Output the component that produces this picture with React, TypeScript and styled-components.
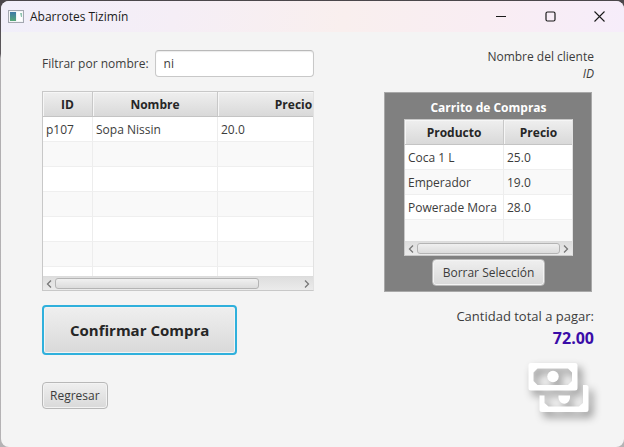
import React, { useState } from "react";
import styled, { createGlobalStyle } from "styled-components";

const GlobalStyle = createGlobalStyle`
  *, *::before, *::after { box-sizing: border-box; }
  body {
    margin: 0;
    background: linear-gradient(#4b474b 0, #5c585c 12%, #b0aeb0 13%, #b5b3b5 100%);
    font-family: "Open Sans", "Noto Sans", sans-serif;
    font-size: 12px;
    line-height: 17px;
    color: #3c3c3c;
  }
  button, input { font: inherit; color: inherit; }
`;

const Window = styled.main`
  display: flex;
  flex-direction: column;
  min-height: calc(100vh - 1px);
  margin: 1px 0 0 1px;
  border-radius: 8px;
  background: #f4f4f4;
  overflow: hidden;
`;

const TitleBar = styled.header`
  display: flex;
  align-items: center;
  height: 31px;
  padding-left: 7px;
  background: linear-gradient(100deg, #f1effa 0%, #f5eef6 28%, #f9efee 55%, #f9edf3 78%, #f6edfa 100%);
  color: #1a1a1a;
`;

const Title = styled.h1`
  flex: 1;
  margin: 0 0 0 6px;
  font-size: 12px;
  font-weight: 400;
`;

const CaptionButton = styled.button`
  display: grid;
  place-items: center;
  width: 49px;
  height: 30px;
  padding: 0;
  border: 0;
  background: none;
`;

const Content = styled.div`
  display: grid;
  grid-template-columns: minmax(0, 272fr) minmax(0, 210fr);
  column-gap: 70px;
  padding: 16px 30px 24px 41px;
`;

const LeftColumn = styled.section`
  display: flex;
  flex-direction: column;
  align-items: flex-start;
  padding-top: 2px;
`;

const RightColumn = styled.section`
  display: flex;
  flex-direction: column;
`;

const Filter = styled.div`
  display: flex;
  align-items: center;
  gap: 6px;
  width: 100%;
  margin-bottom: 14px;
`;

const FilterInput = styled.input`
  flex: 1;
  min-width: 0;
  height: 27px;
  padding: 0 8px;
  border: 1px solid #c8c8c8;
  border-top-color: #b9b9b9;
  border-radius: 4px;
  background: #fff;
  box-shadow: inset 0 1px 1px #ececec;
  outline: none;
`;

const TableBox = styled.div`
  width: 100%;
  border: 1px solid #c8c8c8;
  border-right-color: #e2e2e2;
  background: #fff;
`;

const Viewport = styled.div<{ $height: number }>`
  height: ${(p) => p.$height}px;
  overflow: hidden;
`;

const Table = styled.table<{ $width: number }>`
  width: ${(p) => p.$width}px;
  table-layout: fixed;
  border-collapse: separate;
  border-spacing: 0;

  th {
    height: 25px;
    padding: 0;
    border-right: 1px solid #c8c8c8;
    border-bottom: 1px solid #c4c4c4;
    background: linear-gradient(#efefef, #d9d9d9);
    box-shadow: inset 1px 1px 0 #f6f6f6;
    color: #262626;
    font-weight: 700;
    text-align: center;
  }

  td {
    height: 25px;
    padding: 0 3px;
    border-right: 1px solid #ededed;
    border-bottom: 1px solid #efefef;
    white-space: nowrap;
  }

  tbody tr:nth-child(even) { background: #f9f9f9; }
`;

const Scrollbar = styled.div`
  display: flex;
  align-items: center;
  height: 14px;
  border-top: 1px solid #dcdcdc;
  background: linear-gradient(#dedede, #ebebeb);
`;

const Arrow = styled.button`
  display: grid;
  place-items: center;
  width: 12px;
  height: 12px;
  padding: 0;
  border: 0;
  background: none;
`;

const Track = styled.div`
  flex: 1;
`;

const Thumb = styled.div`
  height: 11px;
  border: 1px solid #b4b4b4;
  border-radius: 3px;
  background: linear-gradient(#f0f0f0, #dcdcdc);
`;

const Button = styled.button<{ $primary?: boolean }>`
  height: ${(p) => (p.$primary ? 50 : 27)}px;
  padding: 0 ${(p) => (p.$primary ? 26 : 7)}px;
  border: ${(p) => (p.$primary ? "2px solid #2fb0dc" : "1px solid #b8b8b8")};
  border-radius: 4px;
  background: linear-gradient(#efefef, #d9d9d9);
  box-shadow: inset 0 0 0 1px #f3f3f3;
  color: ${(p) => (p.$primary ? "#262626" : "#3c3c3c")};
  font-size: ${(p) => (p.$primary ? 15 : 12)}px;
  font-weight: ${(p) => (p.$primary ? 700 : 400)};
  white-space: nowrap;
`;

const Actions = styled.div`
  display: flex;
  flex-direction: column;
  align-items: flex-start;
  gap: 27px;
  margin-top: 14px;
`;

const Client = styled.div`
  margin-bottom: 10px;
  text-align: right;
`;

const ClientId = styled.div`
  font-style: italic;
`;

const Cart = styled.div`
  display: flex;
  flex-direction: column;
  align-items: center;
  height: 200px;
  margin-right: 2px;
  padding: 6px 18px 0 19px;
  border: 1px solid #a8a8a8;
  background: #808080;
`;

const CartTitle = styled.h2`
  margin: 0 0 3px;
  color: #fff;
  font-size: 12px;
  font-weight: 700;
  line-height: 17px;
`;

const CartFooter = styled.div`
  margin-top: 3px;
`;

const CartButton = styled(Button)`
  padding: 0 10px;
`;

const Total = styled.div`
  margin-top: 16px;
  font-size: 13px;
  text-align: right;
`;

const Amount = styled.output`
  display: block;
  margin-top: 3px;
  color: #3a0ca8;
  font-size: 16px;
  font-weight: 700;
  line-height: 20px;
`;

const MoneyIcon = styled.svg`
  align-self: flex-end;
  margin-top: 15px;
  overflow: visible;
  filter: drop-shadow(4px 5px 4px rgba(0, 0, 0, 0.42));
`;

type Column = { label: string; width: number };

const productColumns: Column[] = [
  { label: "ID", width: 50 },
  { label: "Nombre", width: 125 },
  { label: "Precio", width: 152 },
];

const cartColumns: Column[] = [
  { label: "Producto", width: 99 },
  { label: "Precio", width: 70 },
];

const products = [["p107", "Sopa Nissin", "20.0"]];

const cartItems = [
  ["Coca 1 L", "25.0"],
  ["Emperador", "19.0"],
  ["Powerade Mora", "28.0"],
];

type DataTableProps = {
  label: string;
  columns: Column[];
  rows: string[][];
  rowCount: number;
  height: number;
  thumb: number;
};

function DataTable({ label, columns, rows, rowCount, height, thumb }: DataTableProps) {
  const filled = Array.from({ length: rowCount }, (_, i) => rows[i] ?? columns.map(() => ""));
  return (
    <TableBox>
      <Viewport $height={height}>
        <Table aria-label={label} $width={columns.reduce((sum, c) => sum + c.width, 0)}>
          <colgroup>
            {columns.map((c) => (
              <col key={c.label} style={{ width: c.width }} />
            ))}
          </colgroup>
          <thead>
            <tr>
              {columns.map((c) => (
                <th key={c.label} scope="col">{c.label}</th>
              ))}
            </tr>
          </thead>
          <tbody>
            {filled.map((row, r) => (
              <tr key={r}>
                {row.map((cell, c) => (
                  <td key={c}>{cell}</td>
                ))}
              </tr>
            ))}
          </tbody>
        </Table>
      </Viewport>
      <Scrollbar>
        <Arrow aria-label="Desplazar a la izquierda">
          <svg width="6" height="8" fill="none" stroke="#777" strokeWidth="1.300">
            <path d="M5 .5 1.500 4 5 7.500" />
          </svg>
        </Arrow>
        <Track>
          <Thumb style={{ width: `${thumb}%` }} />
        </Track>
        <Arrow aria-label="Desplazar a la derecha">
          <svg width="6" height="8" fill="none" stroke="#777" strokeWidth="1.300">
            <path d="M1 .5 4.500 4 1 7.500" />
          </svg>
        </Arrow>
      </Scrollbar>
    </TableBox>
  );
}

function AppIcon() {
  return (
    <svg width="16" height="13" viewBox="0 0 16 13" aria-hidden="true">
      <defs>
        <linearGradient id="pane" x1="0" y1="0" x2="0" y2="1">
          <stop offset="0" stopColor="#3f7aa8" />
          <stop offset="1" stopColor="#57a878" />
        </linearGradient>
      </defs>
      <rect x=".5" y=".5" width="15" height="12" fill="#f4f6f8" stroke="#a3a7b0" />
      <rect x="2" y="2" width="6" height="9" fill="url(#pane)" />
      <rect x="9" y="2" width="5" height="9" fill="#fff" />
      <path d="M12 3h2v4h-1z" fill="#8fc4b0" />
    </svg>
  );
}

export default function App() {
  const [filter, setFilter] = useState("ni");

  return (
    <>
      <GlobalStyle />
      <Window>
        <TitleBar>
          <AppIcon />
          <Title>Abarrotes Tizimín</Title>
          <CaptionButton aria-label="Minimizar">
            <svg width="11" height="11" stroke="#1a1a1a"><path d="M0 5.500h10" /></svg>
          </CaptionButton>
          <CaptionButton aria-label="Maximizar">
            <svg width="11" height="11" fill="none" stroke="#1a1a1a" strokeWidth="1.200">
              <rect x="1" y="1" width="9" height="9" rx="1.500" />
            </svg>
          </CaptionButton>
          <CaptionButton aria-label="Cerrar">
            <svg width="11" height="11" stroke="#1a1a1a" strokeWidth="1.100">
              <path d="M.5.5l10 10M10.500.5l-10 10" />
            </svg>
          </CaptionButton>
        </TitleBar>

        <Content>
          <LeftColumn>
            <Filter>
              <label htmlFor="filter">Filtrar por nombre:</label>
              <FilterInput id="filter" value={filter} onChange={(e) => setFilter(e.target.value)} />
            </Filter>
            <DataTable label="Productos" columns={productColumns} rows={products} rowCount={7} height={184} thumb={83} />
            <Actions>
              <Button $primary>Confirmar Compra</Button>
              <Button>Regresar</Button>
            </Actions>
          </LeftColumn>

          <RightColumn>
            <Client>
              <div>Nombre del cliente</div>
              <ClientId>ID</ClientId>
            </Client>
            <Cart>
              <CartTitle>Carrito de Compras</CartTitle>
              <DataTable label="Carrito de Compras" columns={cartColumns} rows={cartItems} rowCount={4} height={121} thumb={100} />
              <CartFooter>
                <CartButton>Borrar Selección</CartButton>
              </CartFooter>
            </Cart>
            <Total>
              <label htmlFor="total">Cantidad total a pagar:</label>
              <Amount id="total">72.00</Amount>
            </Total>
            <MoneyIcon width="66" height="52" viewBox="0 0 66 52" fill="#fff" aria-hidden="true">
              <path
                fillRule="evenodd"
                d="M3 0H47a2.500 2.500 0 0 1 2.500 2.500V25a2.500 2.500 0 0 1-2.500 2.500H3A2.500 2.500 0 0 1 .5 25V2.500A2.500 2.500 0 0 1 3 0ZM9.500 5.500 5.500 9.500V18l4 4H40l4-4V9.500l-4-4Z"
              />
              <circle cx="25" cy="13.500" r="5.700" />
              <path d="M11.500 32.500h5v7.500l4 3.500H51l4-3.500V22h3a2.500 2.500 0 0 1 2.500 2.500V46.500A2.500 2.500 0 0 1 58 49H14a2.500 2.500 0 0 1-2.500-2.500Z" />
              <path d="M30.500 32.500H42c.5 4.500-2 8.200-5.700 8.200s-6.300-3.700-5.800-8.200Z" />
            </MoneyIcon>
          </RightColumn>
        </Content>
      </Window>
    </>
  );
}
